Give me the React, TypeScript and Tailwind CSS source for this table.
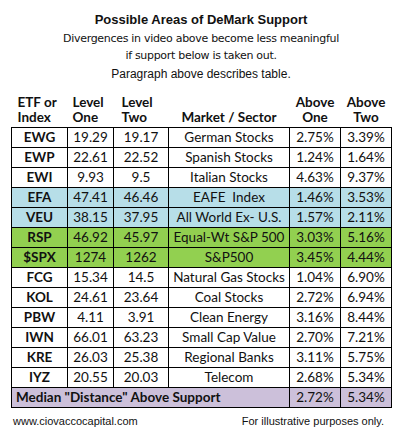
const rows = [
  { t: "EWG", a: "19.29", b: "19.17", m: "German Stocks", p1: "2.75%", p2: "3.39%", bg: "" },
  { t: "EWP", a: "22.61", b: "22.52", m: "Spanish Stocks", p1: "1.24%", p2: "1.64%", bg: "" },
  { t: "EWI", a: "9.93", b: "9.5", m: "Italian Stocks", p1: "4.63%", p2: "9.37%", bg: "" },
  { t: "EFA", a: "47.41", b: "46.46", m: "EAFE  Index", p1: "1.46%", p2: "3.53%", bg: "bg-[#b7dee8]" },
  { t: "VEU", a: "38.15", b: "37.95", m: "All World Ex- U.S.", p1: "1.57%", p2: "2.11%", bg: "bg-[#b7dee8]" },
  { t: "RSP", a: "46.92", b: "45.97", m: "Equal-Wt S&P 500", p1: "3.03%", p2: "5.16%", bg: "bg-[#92d050]" },
  { t: "$SPX", a: "1274", b: "1262", m: "S&P500", p1: "3.45%", p2: "4.44%", bg: "bg-[#92d050]" },
  { t: "FCG", a: "15.34", b: "14.5", m: "Natural Gas Stocks", p1: "1.04%", p2: "6.90%", bg: "" },
  { t: "KOL", a: "24.61", b: "23.64", m: "Coal Stocks", p1: "2.72%", p2: "6.94%", bg: "" },
  { t: "PBW", a: "4.11", b: "3.91", m: "Clean Energy", p1: "3.16%", p2: "8.44%", bg: "" },
  { t: "IWN", a: "66.01", b: "63.23", m: "Small Cap Value", p1: "2.70%", p2: "7.21%", bg: "" },
  { t: "KRE", a: "26.03", b: "25.38", m: "Regional Banks", p1: "3.11%", p2: "5.75%", bg: "" },
  { t: "IYZ", a: "20.55", b: "20.03", m: "Telecom", p1: "2.68%", p2: "5.34%", bg: "" },
];

const cell = "border border-black h-[20px] p-0 text-center leading-none";

const Head = ({ a, b }: { a: string; b?: string }) => (
  <div className="flex flex-col leading-[15px]">
    <span>{a}</span>
    {b && <span>{b}</span>}
  </div>
);

const App = () => {
  return (
    <div className="w-[402px] h-[438px] bg-white text-[#111]">
      <div className="flex flex-col items-center pt-[12px] font-['Liberation_Sans',Arial,sans-serif]">
        <h1 className="text-[13px] font-bold leading-[16px]">Possible Areas of DeMark Support</h1>
        <p className="mt-[2px] text-[11px] leading-[17px] font-['DejaVu_Sans',sans-serif] tracking-[-0.3px]">
          Divergences in video above become less meaningful
        </p>
        <p className="text-[11px] leading-[17px] font-['DejaVu_Sans',sans-serif] tracking-[-0.3px]">
          if support below is taken out.
        </p>
        <p className="mt-[3px] text-[12px] leading-[15px]">Paragraph above describes table.</p>
      </div>
      <table className="ml-[11px] mt-[13px] w-[381px] border-collapse table-fixed font-['Lato',sans-serif] text-[13.5px]">
        <colgroup>
          <col className="w-[56px]" />
          <col className="w-[46px]" />
          <col className="w-[55px]" />
          <col className="w-[121px]" />
          <col className="w-[51px]" />
          <col className="w-[51px]" />
        </colgroup>
        <thead>
          <tr className="align-bottom">
            <th className="text-left pl-[6px] pb-[2px] font-bold"><Head a="ETF or" b="Index" /></th>
            <th className="text-left pl-[5px] pb-[2px] font-bold"><Head a="Level" b="One" /></th>
            <th className="text-left pl-[8px] pb-[2px] font-bold"><Head a="Level" b="Two" /></th>
            <th className="pb-[2px] font-bold"><Head a="Market / Sector" /></th>
            <th className="pb-[2px] font-bold"><Head a="Above" b="One" /></th>
            <th className="pb-[2px] font-bold"><Head a="Above" b="Two" /></th>
          </tr>
        </thead>
        <tbody>
          {rows.map((r) => (
            <tr key={r.t} className={r.bg}>
              <td className={`${cell} font-bold`}>{r.t}</td>
              <td className={cell}>{r.a}</td>
              <td className={cell}>{r.b}</td>
              <td className={`${cell} whitespace-pre`}>{r.m}</td>
              <td className={cell}>{r.p1}</td>
              <td className={cell}>{r.p2}</td>
            </tr>
          ))}
          <tr className="bg-[#ccc0da]">
            <td colSpan={4} className="border border-black h-[20px] p-0 pl-[4px] font-bold leading-none whitespace-nowrap">
              Median "Distance" Above Support
            </td>
            <td className={cell}>2.72%</td>
            <td className={cell}>5.34%</td>
          </tr>
        </tbody>
      </table>
      <div className="flex justify-between items-center mt-[6px] pl-[13px] pr-[18px] font-['Liberation_Sans',Arial,sans-serif] text-[11px] leading-[14px]">
        <span>www.ciovaccocapital.com</span>
        <span>For illustrative purposes only.</span>
      </div>
    </div>
  );
};

export default App;
